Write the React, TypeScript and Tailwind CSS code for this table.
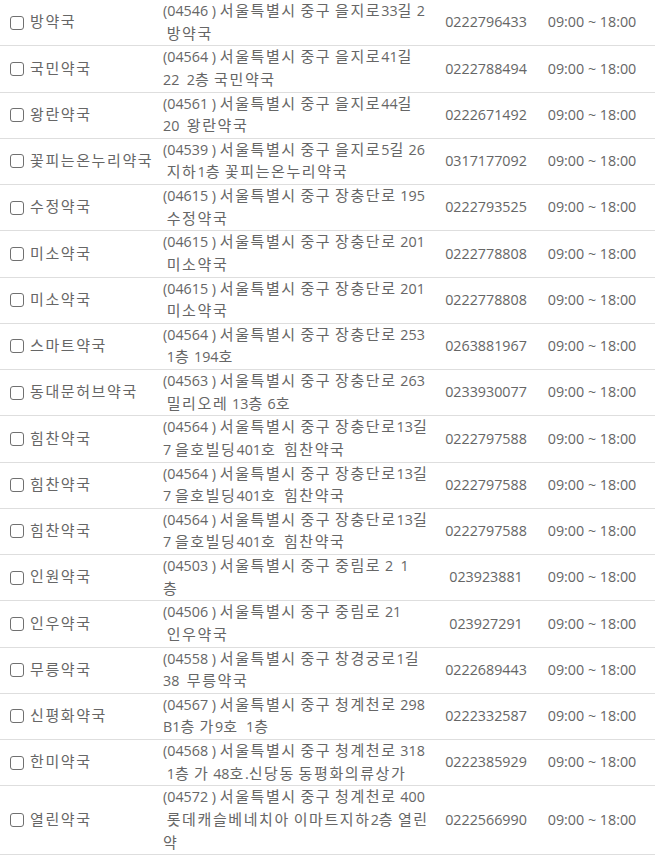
const rows: { name: string; addr: string[]; tel: string }[] = [
  { name: "방약국", addr: ["(04546 ) 서울특별시 중구 을지로33길 2", " 방약국"], tel: "0222796433" },
  { name: "국민약국", addr: ["(04564 ) 서울특별시 중구 을지로41길", "22  2층 국민약국"], tel: "0222788494" },
  { name: "왕란약국", addr: ["(04561 ) 서울특별시 중구 을지로44길", "20  왕란약국"], tel: "0222671492" },
  { name: "꽃피는온누리약국", addr: ["(04539 ) 서울특별시 중구 을지로5길 26", " 지하1층 꽃피는온누리약국"], tel: "0317177092" },
  { name: "수정약국", addr: ["(04615 ) 서울특별시 중구 장충단로 195", " 수정약국"], tel: "0222793525" },
  { name: "미소약국", addr: ["(04615 ) 서울특별시 중구 장충단로 201", " 미소약국"], tel: "0222778808" },
  { name: "미소약국", addr: ["(04615 ) 서울특별시 중구 장충단로 201", " 미소약국"], tel: "0222778808" },
  { name: "스마트약국", addr: ["(04564 ) 서울특별시 중구 장충단로 253", " 1층 194호"], tel: "0263881967" },
  { name: "동대문허브약국", addr: ["(04563 ) 서울특별시 중구 장충단로 263", " 밀리오레 13층 6호"], tel: "0233930077" },
  { name: "힘찬약국", addr: ["(04564 ) 서울특별시 중구 장충단로13길", "7 을호빌딩401호  힘찬약국"], tel: "0222797588" },
  { name: "힘찬약국", addr: ["(04564 ) 서울특별시 중구 장충단로13길", "7 을호빌딩401호  힘찬약국"], tel: "0222797588" },
  { name: "힘찬약국", addr: ["(04564 ) 서울특별시 중구 장충단로13길", "7 을호빌딩401호  힘찬약국"], tel: "0222797588" },
  { name: "인원약국", addr: ["(04503 ) 서울특별시 중구 중림로 2  1", "층"], tel: "023923881" },
  { name: "인우약국", addr: ["(04506 ) 서울특별시 중구 중림로 21", " 인우약국"], tel: "023927291" },
  { name: "무릉약국", addr: ["(04558 ) 서울특별시 중구 창경궁로1길", "38  무릉약국"], tel: "0222689443" },
  { name: "신평화약국", addr: ["(04567 ) 서울특별시 중구 청계천로 298", "B1층 가9호  1층"], tel: "0222332587" },
  { name: "한미약국", addr: ["(04568 ) 서울특별시 중구 청계천로 318", " 1층 가 48호.신당동 동평화의류상가"], tel: "0222385929" },
  { name: "열린약국", addr: ["(04572 ) 서울특별시 중구 청계천로 400", " 롯데캐슬베네치아 이마트지하2층 열린", "약"], tel: "0222566990" },
];

// hangul runs get a little more size and spacing, like the wide korean system font
function Ko({ text }: { text: string }) {
  const parts = text.split(/([\uAC00-\uD7A3]+)/);
  return (
    <>
      {parts.map((p, i) =>
        /[\uAC00-\uD7A3]/.test(p) ? (
          <span key={i} className="text-[15px] leading-[0px] tracking-[1.6px]">
            {p}
          </span>
        ) : (
          <span key={i}>{p}</span>
        )
      )}
    </>
  );
}

export default function App() {
  return (
    <div className="w-[655px] bg-white text-[14.3px] leading-[22.625px] text-[#666] font-['Open_Sans','Noto_Sans_CJK_KR',sans-serif]">
      <table className="w-full table-fixed border-collapse">
        <colgroup>
          <col className="w-[157px]" />
          <col className="w-[280px]" />
          <col className="w-[98px]" />
          <col />
        </colgroup>
        <tbody>
          {rows.map((r, i) => (
            <tr key={i} className="border-b border-[#dedede]">
              <td className="p-0 pl-[10px] align-middle">
                <label className="flex items-center gap-[6px] whitespace-nowrap">
                  <span className="inline-block w-[14px] h-[14px] shrink-0 rounded-[3px] border border-[#707070] bg-white" />
                  <span>
                    <Ko text={r.name} />
                  </span>
                </label>
              </td>
              <td className="p-0 pl-[6px] align-middle whitespace-pre">
                {r.addr.map((line, j) => (
                  <div key={j}>
                    <Ko text={line} />
                  </div>
                ))}
              </td>
              <td className="p-0 text-center align-middle">{r.tel}</td>
              <td className="p-0 pr-[6px] text-center align-middle whitespace-nowrap">09:00 ~ 18:00</td>
            </tr>
          ))}
        </tbody>
      </table>
    </div>
  );
}
